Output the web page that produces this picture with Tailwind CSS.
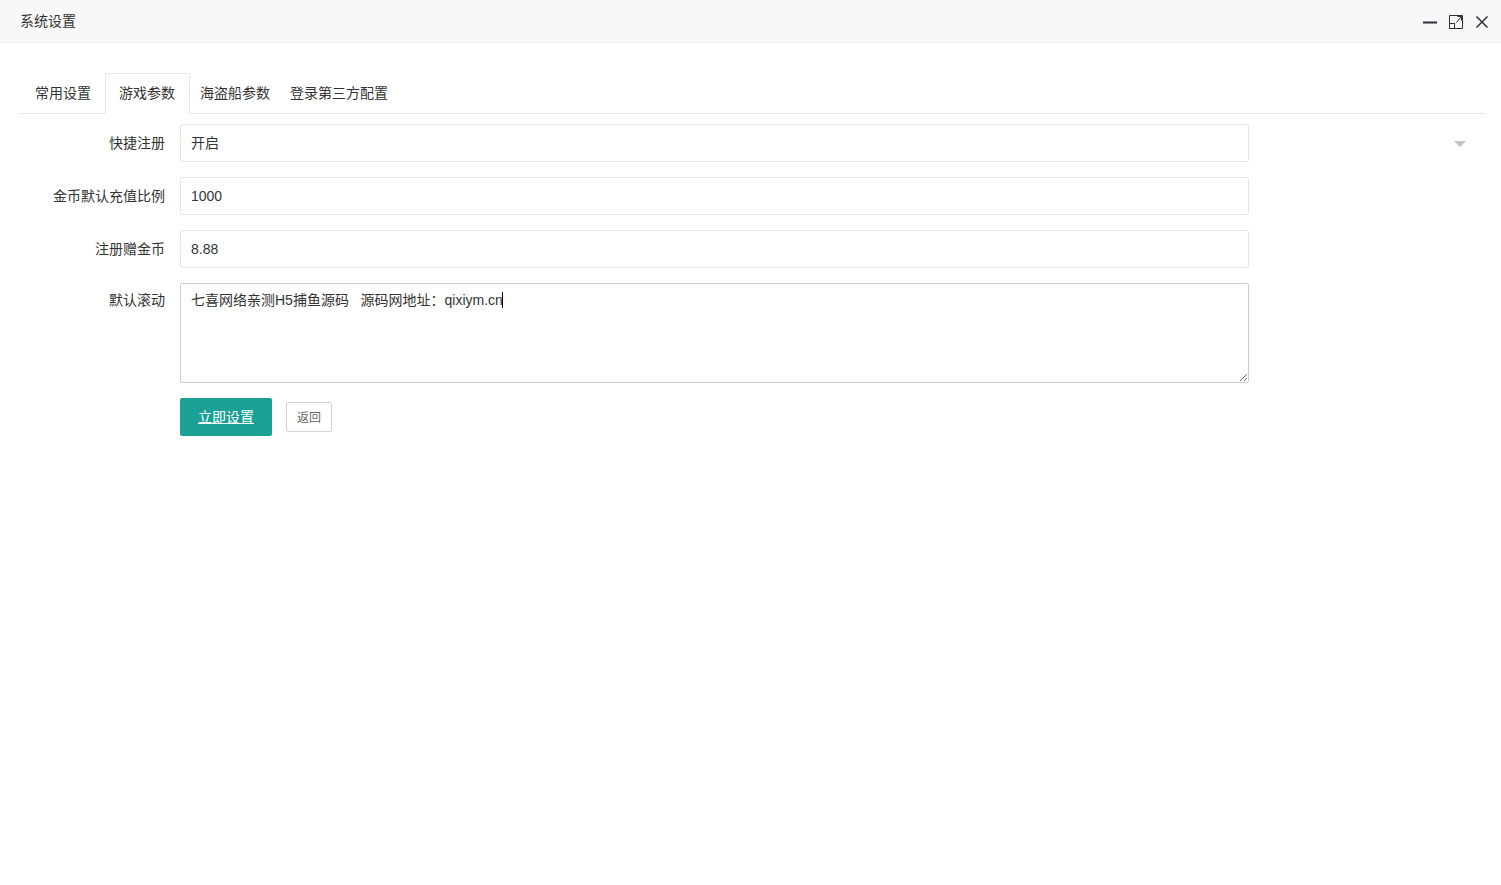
<!DOCTYPE html>
<html lang="zh-CN">
<head>
  <meta charset="UTF-8" />
  <script src="https://cdn.jsdelivr.net/npm/@tailwindcss/browser@4"></script>
  <title>系统设置</title>
</head>
<body class="bg-white min-h-screen text-[14px] text-[#333] font-['Liberation_Sans','Noto_Sans_CJK_SC',sans-serif]">
  <!-- Header -->
  <header class="h-[43px] bg-[#f8f8f8] border-b border-[#eee] flex justify-between items-center pl-5 pr-[11px]">
    <span class="text-[#333] leading-[42px]">系统设置</span>
    <div class="flex items-center gap-[10px]">
      <svg width="16" height="16" viewBox="0 0 16 16"><path d="M1 9.500H15" stroke="#2e2d3c" stroke-width="2"/></svg>
      <svg width="16" height="16" viewBox="0 0 16 16" fill="none" stroke="#2e2d3c" stroke-width="1"><path d="M1.500 10.500V2.500H14.500V15.500H6.500M8.500 9.500L13.500 3.500M9.500 3.500H13.500V7.500"/><rect x="1.500" y="10.500" width="5" height="5"/></svg>
      <svg width="16" height="16" viewBox="0 0 16 16" fill="none" stroke="#2e2d3c" stroke-width="1.500"><path d="M2.500 3.500L13.500 14.500M13.500 3.500L2.500 14.500"/></svg>
    </div>
  </header>

  <main class="px-5 pt-[30px]">
    <!-- Tabs -->
    <div class="flex h-[41px] border-b border-[#e6e6e6] w-[1466px] text-[#333]">
      <div class="pl-[15px] pr-[14px] leading-[40px]">常用设置</div>
      <div class="pl-[13px] pr-[14px] leading-[38px] h-[41px] border border-[#e6e6e6] border-b-white rounded-t-[2px] bg-white">游戏参数</div>
      <div class="px-[10px] leading-[40px]">海盗船参数</div>
      <div class="px-[10px] leading-[40px]">登录第三方配置</div>
    </div>

    <!-- Form -->
    <form class="relative w-[1466px] pt-[10px] flex flex-col gap-[15px]">
      <div class="flex">
        <label class="w-[145px] text-right leading-[38px]">快捷注册</label>
        <input class="ml-[15px] w-[1069px] h-[38px] px-[10px] pb-[2px] border border-[#e6e6e6] rounded-[2px] outline-none" value="开启" />
        <span class="absolute right-[20px] top-[27px] border-x-[6px] border-x-transparent border-t-[6px] border-t-[#c2c2c2]"></span>
      </div>
      <div class="flex">
        <label class="w-[145px] text-right leading-[38px]">金币默认充值比例</label>
        <input class="ml-[15px] w-[1069px] h-[38px] px-[10px] border border-[#e6e6e6] rounded-[2px] outline-none" value="1000" />
      </div>
      <div class="flex">
        <label class="w-[145px] text-right leading-[38px]">注册赠金币</label>
        <input class="ml-[15px] w-[1069px] h-[38px] px-[10px] border border-[#e6e6e6] rounded-[2px] outline-none" value="8.88" />
      </div>
      <div class="flex">
        <label class="w-[145px] text-right leading-[34px]">默认滚动</label>
        <div class="relative ml-[15px] w-[1069px] h-[100px]">
          <textarea class="block w-full h-full px-[10px] py-[6px] leading-[20px] border border-[#ccc] rounded-[2px] outline-none resize-y">七喜网络亲测H5捕鱼源码   源码网地址：qixiym.cn</textarea>
          <span class="absolute left-[322px] top-[9px] w-px h-[16px] bg-black"></span>
        </div>
      </div>
      <div class="flex items-center pl-[160px]">
        <button type="button" class="w-[92px] h-[38px] bg-[#1aa094] text-white rounded-[2px] underline underline-offset-1">立即设置</button>
        <button type="button" class="ml-[14px] w-[46px] h-[30px] pt-[2px] bg-white border border-[#d2d2d2] rounded-[2px] text-[12px] text-[#666]">返回</button>
      </div>
    </form>
  </main>
</body>
</html>
